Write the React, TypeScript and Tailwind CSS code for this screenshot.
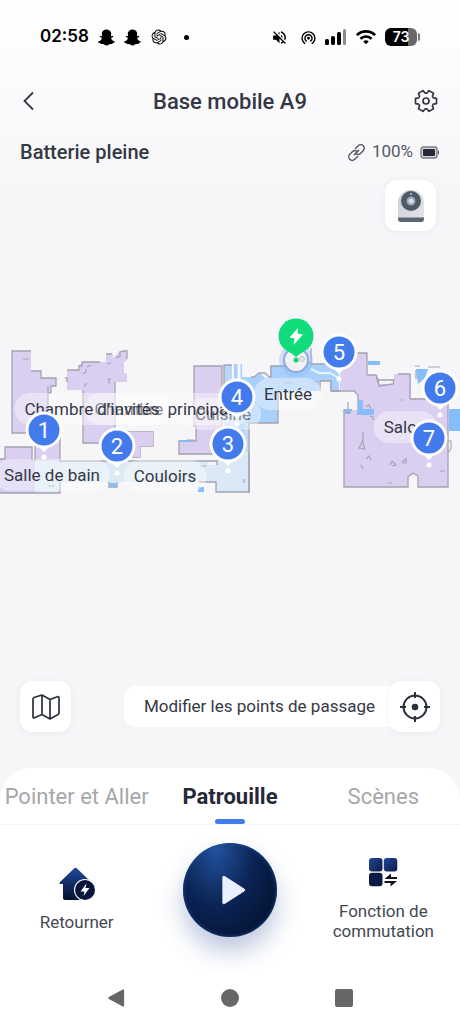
import type { ReactNode } from "react";
import { FaSnapchatGhost } from "react-icons/fa";
import { MdVolumeOff, MdWifi, MdWifiTethering } from "react-icons/md";
import { RiOpenaiFill } from "react-icons/ri";

// Map units: x runs 0-460, y runs 310-500.
const MAP = { top: 310, width: 460, height: 190 };

type Spot = { text: string; x: number; y: number };

const ROOMS: Spot[] = [
  { text: "Cuisine", x: 223, y: 414 },
  { text: "Chambre principale", x: 168, y: 409 },
  { text: "Chambre d’invités", x: 92, y: 409 },
  { text: "Entrée", x: 288, y: 394 },
  { text: "Salle de bain", x: 52, y: 475 },
  { text: "Couloirs", x: 165, y: 476 },
  { text: "Salon", x: 405, y: 427 },
];

const WAYPOINTS: Spot[] = [
  { text: "1", x: 44, y: 430 },
  { text: "2", x: 117, y: 446 },
  { text: "4", x: 237, y: 397 },
  { text: "3", x: 228, y: 444 },
  { text: "5", x: 339, y: 352 },
  { text: "6", x: 440, y: 388 },
  { text: "7", x: 429, y: 438 },
];

function place(x: number, y: number) {
  return {
    left: `${(x / MAP.width) * 100}%`,
    top: `${((y - MAP.top) / MAP.height) * 100}%`,
  };
}

function gearPath() {
  const pts: string[] = [];
  const steps: [number, number][] = [[-23, 8], [-14, 10.8], [14, 10.8], [23, 8]];
  for (let i = 0; i < 6; i++) {
    for (const [offset, r] of steps) {
      const a = ((i * 60 + offset) * Math.PI) / 180;
      pts.push(`${(12 + r * Math.cos(a)).toFixed(2)} ${(12 + r * Math.sin(a)).toFixed(2)}`);
    }
  }
  return `M${pts.join("L")}Z`;
}

function StatusBar() {
  return (
    <div className="flex h-[74px] items-center justify-between pl-10 pr-10 text-black">
      <div className="flex items-center gap-2">
        <span className="font-['Inter'] text-[17px] font-semibold">02:58</span>
        <FaSnapchatGhost className="ml-px size-[17px]" />
        <FaSnapchatGhost className="ml-px size-[17px]" />
        <RiOpenaiFill className="ml-px size-[18px]" />
        <span className="ml-2 size-[5px] rounded-full bg-black" />
      </div>
      <div className="flex items-center gap-2">
        <MdVolumeOff className="mr-1 size-[17px]" />
        <MdWifiTethering className="size-[17px]" />
        <svg viewBox="0 0 22 16" className="h-4 w-[22px]" aria-hidden>
          <rect x="0" y="10" width="4" height="6" rx="1.5" />
          <rect x="6" y="7" width="4" height="9" rx="1.5" />
          <rect x="12" y="3" width="4" height="13" rx="1.5" />
          <rect x="18" y="0" width="3" height="16" rx="1.5" fill="#8a8a8c" />
        </svg>
        <MdWifi className="size-[22px]" />
        <div className="flex items-center gap-px">
          <span className="flex h-[18px] w-8 items-center justify-center rounded-md bg-linear-to-r from-black from-73% to-[#68686a] to-73% font-['Inter'] text-sm font-semibold text-white">
            73
          </span>
          <span className="h-2 w-[2px] rounded-r bg-[#777]" />
        </div>
      </div>
    </div>
  );
}

function TopBar() {
  return (
    <header className="grid h-[54px] grid-cols-[40px_1fr_40px] items-center px-5">
      <button aria-label="Retour" className="text-[#343845]">
        <svg viewBox="0 0 24 24" className="size-6 -translate-x-1" fill="none" stroke="currentColor" strokeWidth="1.8">
          <path d="M17 3.500 8.500 12l8.500 8.500" />
        </svg>
      </button>
      <h1 className="text-center text-[22px] font-medium text-[#343845]">Base mobile A9</h1>
      <button aria-label="Réglages" className="mr-[2px] justify-self-end text-[#343845]">
        <svg viewBox="0 0 24 24" className="size-6" fill="none" stroke="currentColor" strokeWidth="1.700" strokeLinejoin="round">
          <path d={gearPath()} />
          <circle cx="12" cy="12" r="3" />
        </svg>
      </button>
    </header>
  );
}

function BatteryRow() {
  return (
    <div className="flex h-12 items-center justify-between px-5 text-[#343845]">
      <span className="text-xl font-medium">Batterie pleine</span>
      <span className="flex items-center gap-[7px] text-[17px] text-[#555963]">
        <svg viewBox="0 0 24 24" className="size-[17px]" fill="none" stroke="currentColor" strokeWidth="2" strokeLinecap="round">
          <path d="m9 15 6-6" />
          <path d="m10.500 6.500 4-4a4.900 4.900 0 0 1 7 7l-4 4a4.900 4.900 0 0 1-6 .500" />
          <path d="m13.500 17.500-4 4a4.900 4.900 0 0 1-7-7l4-4a4.900 4.900 0 0 1 6-.500" />
        </svg>
        100%
        <svg viewBox="0 0 20 13" className="h-[13px] w-5" aria-hidden>
          <rect x="1" y="1" width="16" height="11" rx="2.500" fill="#d4d5d9" stroke="#777a83" strokeWidth="1.400" />
          <rect x="3" y="3" width="12" height="7" rx="1" fill="#252936" />
          <path d="M18 4q2 2.500 0 5z" fill="#343845" />
        </svg>
      </span>
    </div>
  );
}

function SquareButton({ label, children }: { label: string; children: ReactNode }) {
  return (
    <button
      aria-label={label}
      className="z-10 flex size-[51px] shrink-0 items-center justify-center rounded-xl bg-white text-[#2b303d] shadow-[0_1px_6px_rgba(40,50,80,0.06)]"
    >
      {children}
    </button>
  );
}

function CameraIcon() {
  return (
    <svg viewBox="0 0 28 34" className="h-[34px] w-7">
      <defs>
        <linearGradient id="cam-body" x1="0" y1="0" x2="1" y2="1">
          <stop offset="0" stopColor="#c9ccd1" />
          <stop offset="1" stopColor="#e4e6ea" />
        </linearGradient>
      </defs>
      <path d="M1 14a13 13 0 0 1 26 0v15H1z" fill="url(#cam-body)" />
      <path d="M1 28.500h26v1.500q0 3-3 3H4q-3 0-3-3z" fill="#5c6573" />
      <circle cx="14" cy="12" r="10" fill="#4f5967" />
      <circle cx="14" cy="12" r="4.500" fill="#9aa7b7" />
      <circle cx="14" cy="12" r="2.500" fill="#d9e2ec" />
      <circle cx="14" cy="5" r="1" fill="#bcc6d2" />
    </svg>
  );
}

function FloorPlan() {
  return (
    <svg viewBox="0 310 460 190" className="absolute inset-0 size-full" aria-hidden>
      <g stroke="#a4a2ae" strokeWidth="1.300">
        <path fill="#dacff0" d="M31 351H12v82h36v-40h3v-7h5v-8H41v-7H31" />
        <path fill="#dacff0" stroke="none" d="M67 370h12v-5l4-3h23v-8h7v4l7-7h7v9l-3 2v11h3v9h-12v61H83v-53H67z" />
        <path fill="none" d="M67 370h12v-4h3v-4h18M116 358l4-2v-4l3-1h4v8M83 390v53h20M115 382v50h38v14h-13v11h-8M65 378h2v4M106 354h6" />
        <path fill="#dacff0" stroke="none" d="M115 432h38v14h-13v11h-20z" />
        <path fill="#dacff0" d="M0 460h5v-13h27v13z" stroke="none" />
        <path fill="#dacff0" stroke="none" d="M35 434h25v27H35z" />
        <path fill="#d4cbee" stroke="none" d="M0 459h35v34H0z" />
        <path fill="#dbe9f6" stroke="none" d="M35 461h173v4h9v-13h32v40h-33v-10h-99v5h-8v-5H60v11H35z" />
        <path fill="none" d="M0 459h5v-12h27v14M35 440v21M60 434v27h57M109 482v5h8v-5M60 482v11H0M128 461h89v4M199 482h17v10h33v-40" />
        <path fill="#dacff0" d="M194 366h28v74h-4v14h-39v-13h17v-15h-2z" />
        <path fill="#b9d6fa" stroke="none" d="M224 365h8v24h11v62h-19z" />
        <path fill="none" d="M224 389v-24h8" />
        <path fill="#bedaf8" stroke="none" d="M231 421h18v31h-18z" />
        <path fill="#a9cffb" stroke="none" d="M234 364h8v13h12l6-4 5 5h5v-12h16v-5h25v3h28v27h-9v-10h-11v10h-41v32h-33v8h-11z" />
        <path fill="none" d="M251 377h3l5-4h6l4 4h2v-11h15M311 348v16h28M340 391h-9v-10h-11v10M278 392v31h-29v70" />
        <path fill="#dacff0" stroke="none" d="M340 353h27v22h11v9h16v-10h17v24h37v89h-30v-11l-5-3-5 4v10h-64v-77h14v-16l-5-4h-13z" />
        <path fill="none" d="M357 353h10v22M331 391h23l4 4v20M352 410h-8v77h64v-10l5-4 5 3v11h30v-88h-38M367 375h9l2 8M379 380h15l-1 4-14 2-1-8M398 374h12v25" />
      </g>
      <path fill="#86bdfb" d="M368 361h12v4h-12zM358 400h5v9h11v6h-16zM345 409h6v5h-6zM449 409h11v22h-11zM416 369h12l-3 9-7 6zM198 487h6v5h-6zM110 483h6v4h-6zM181 440h12v2h-12z" />
      <path
        fill="none"
        stroke="#aaa3b4"
        strokeWidth="1.200"
        d="M23 359h6M83 374l3-2v-3M87 367l4-2M84 387l3-4M107 379h4M109 379v5M107 364l4-1M48 386v6M187 440h7M200 466h6M415 366h5M416 370v9M428 367h12M348 402v12M363 432v9l-4 7 6 1-3-9M361 465l2 4M366 459l3-3 2 4M366 407l3-2 2 4M370 416l3 1v3M390 465l2-4 4 4-4 1M402 462l4-3v4h-4M440 471h5M388 483h4M244 479v4M48 486h6M284 383h8M312 382h6M448 441h3v7l-2 4M402 401v-2"
      />
      <path fill="none" stroke="#f3f9ff" strokeWidth="3" d="M239 363v14q0 10-2 15" />
      <path fill="none" stroke="#e8f3ff" strokeWidth="2" d="M311 369l8 4h11l9 5" />
      <circle cx="296" cy="360" r="17" fill="#89b7fa" opacity="0.350" />
      <circle cx="296" cy="360" r="12" fill="#f1f1f2" stroke="#90a9df" strokeWidth="2" />
      <circle cx="302" cy="359" r="2.500" fill="#e8e8ea" stroke="#b9bbc2" strokeWidth="0.800" />
      <circle cx="296" cy="360" r="2.500" fill="#12cf73" />
    </svg>
  );
}

function Waypoint({ text, x, y }: Spot) {
  return (
    <button
      aria-label={`Point ${text}`}
      className="absolute flex size-9 -translate-1/2 items-center justify-center text-[22px] text-white"
      style={place(x, y)}
    >
      <svg viewBox="0 0 36 36" className="absolute inset-0 size-9 overflow-visible" aria-hidden>
        <path d="M11 33 18 40l7-7z" fill="#fff" />
        <circle cx="18" cy="18" r="18.500" fill="#fff" />
        <circle cx="18" cy="18" r="15.500" fill="#447bec" />
        <circle cx="18" cy="45" r="2.500" fill="#fff" />
      </svg>
      <span className="relative">{text}</span>
    </button>
  );
}

function ChargerPin() {
  return (
    <div className="absolute size-9 -translate-1/2" style={place(296, 336)}>
      <svg viewBox="0 0 36 36" className="size-9 overflow-visible" aria-hidden>
        <path d="M9 32 18 39l9-7z" fill="#10dc7c" />
        <circle cx="18" cy="18" r="17.500" fill="#10dc7c" />
        <path d="M20 10 11.500 19.500l5 1-1 6.500L25 16.500l-5.500-1z" fill="#fff" />
      </svg>
    </div>
  );
}

function PatrolMap() {
  return (
    <section className="relative mt-[79px] aspect-[460/190] w-full overflow-hidden">
      <FloorPlan />
      {ROOMS.map((r) => (
        <span
          key={r.text}
          className="absolute -translate-1/2 rounded-2xl bg-white/40 px-[10px] py-1 text-[17px] leading-6 whitespace-nowrap text-[#343845]"
          style={place(r.x, r.y)}
        >
          {r.text}
        </span>
      ))}
      <ChargerPin />
      {WAYPOINTS.map((w) => (
        <Waypoint key={w.text} {...w} />
      ))}
    </section>
  );
}

function MapTools() {
  return (
    <div className="mt-auto flex items-center justify-between px-5 pb-9">
      <SquareButton label="Cartes">
        <svg viewBox="0 0 28 28" className="size-7" fill="none" stroke="currentColor" strokeWidth="1.700" strokeLinejoin="round">
          <path d="M1 6q0-1 1-1.500L10 2l8 4.500L26 3.500q1 0 1 1V20q0 1-1 1.500L18 26l-8-4.500L2 25q-1 0-1-1zM10 2v19.500M18 6.500V26" />
        </svg>
      </SquareButton>
      <div className="flex items-center">
        <button className="-mr-3 h-[41px] rounded-xl bg-white pr-[26px] pl-5 text-[17px] text-[#343845]">
          Modifier les points de passage
        </button>
        <SquareButton label="Localiser">
          <svg viewBox="0 0 30 30" className="size-[30px]" fill="none" stroke="currentColor" strokeWidth="2">
            <circle cx="15" cy="15" r="11.500" />
            <circle cx="15" cy="15" r="3.300" fill="currentColor" stroke="none" />
            <path d="M15 0v6M15 24v6M0 15h6M24 15h6" />
          </svg>
        </SquareButton>
      </div>
    </div>
  );
}

function Tabs() {
  return (
    <nav className="grid h-[57px] grid-cols-3 border-b border-[#f3f3f5] text-[22px] whitespace-nowrap text-[#a6a7aa]">
      <button>Pointer et Aller</button>
      <button className="relative font-bold text-[#252936]">
        Patrouille
        <span className="absolute bottom-0 left-1/2 h-[5px] w-[30px] -translate-x-1/2 rounded-full bg-[#447bec]" />
      </button>
      <button>Scènes</button>
    </nav>
  );
}

function HomeChargeIcon() {
  return (
    <svg viewBox="0 0 36 34" className="h-[34px] w-9">
      <defs>
        <linearGradient id="navy" x1="0" y1="0" x2="0" y2="1">
          <stop offset="0" stopColor="#1c4a9b" />
          <stop offset="1" stopColor="#06102e" />
        </linearGradient>
      </defs>
      <path d="M15 1.500q1.500-1.500 3 0L32 15q1 2-1 2h-2v15q0 1-1.500 1H6q-2 0-2-2V17H1q-1-1 0-2z" fill="url(#navy)" />
      <circle cx="26" cy="23" r="11" fill="#fff" />
      <circle cx="26" cy="23" r="10" fill="#07153a" />
      <path d="m27.500 16.500-6 8h4L24.500 29l6-8h-4z" fill="#fff" />
    </svg>
  );
}

function SwitchIcon() {
  return (
    <svg viewBox="0 0 30 30" className="size-[30px]">
      <defs>
        <linearGradient id="tile" x1="0" y1="0" x2="1" y2="1">
          <stop offset="0" stopColor="#22489a" />
          <stop offset="1" stopColor="#0a1b48" />
        </linearGradient>
      </defs>
      <rect x="1" y="1" width="13.500" height="13.500" rx="3" fill="url(#tile)" />
      <rect x="15.800" y="1" width="13.500" height="13.500" rx="3" fill="url(#tile)" />
      <rect x="1" y="15.800" width="13.500" height="13.500" rx="3" fill="#091a45" />
      <path d="M29 22H16.500l6.500-5.500V20h6zM16.500 24H29l-6.500 5.500V26h-6z" fill="#10131c" />
    </svg>
  );
}

function Actions() {
  return (
    <div className="grid h-[146px] grid-cols-3 items-start pt-[18px] text-[17px] leading-5 text-[#444852]">
      <button className="mt-6 flex flex-col items-center gap-[11px]">
        <HomeChargeIcon />
        Retourner
      </button>
      <button
        aria-label="Démarrer la patrouille"
        className="flex size-[94px] items-center justify-center justify-self-center rounded-full bg-radial-[at_35%_5%] from-[#23539f] via-[#0b2455] via-45% to-[#020b22] shadow-[0_14px_24px_rgba(35,70,145,0.3),inset_0_0_4px_#1f4a94]"
      >
        <svg viewBox="0 0 28 32" className="h-[30px] w-[26px] translate-x-1">
          <path d="M2 2q0-1.500 2-.500L25 15q1.500 1 0 2L4 30.500q-2 1-2-.500z" fill="#eaf0ff" stroke="#eaf0ff" />
        </svg>
      </button>
      <button className="mt-[14px] flex flex-col items-center gap-[14px]">
        <SwitchIcon />
        <span>
          Fonction de
          <br />
          commutation
        </span>
      </button>
    </div>
  );
}

function SystemNav() {
  return (
    <div className="flex h-[54px] items-center justify-center gap-24 text-[#676767]">
      <button aria-label="Précédent">
        <svg viewBox="0 0 20 20" className="size-[18px]" fill="currentColor">
          <path d="M17 .800q2-.800 2 1v16.400q0 1.800-2 1L2 11q-1.500-1 0-2z" />
        </svg>
      </button>
      <button aria-label="Accueil" className="size-[18px] rounded-full bg-current" />
      <button aria-label="Applications récentes" className="size-[18px] rounded-xs bg-current" />
    </div>
  );
}

export default function App() {
  return (
    <main className="flex min-h-screen flex-col bg-linear-to-b from-white to-[#f6f6f9] to-20% font-['Roboto',sans-serif]">
      <StatusBar />
      <TopBar />
      <BatteryRow />
      <div className="mt-1 flex justify-end pr-6">
        <SquareButton label="Caméra">
          <CameraIcon />
        </SquareButton>
      </div>
      <PatrolMap />
      <MapTools />
      <div className="rounded-t-[32px] bg-white">
        <Tabs />
        <Actions />
        <SystemNav />
      </div>
    </main>
  );
}
